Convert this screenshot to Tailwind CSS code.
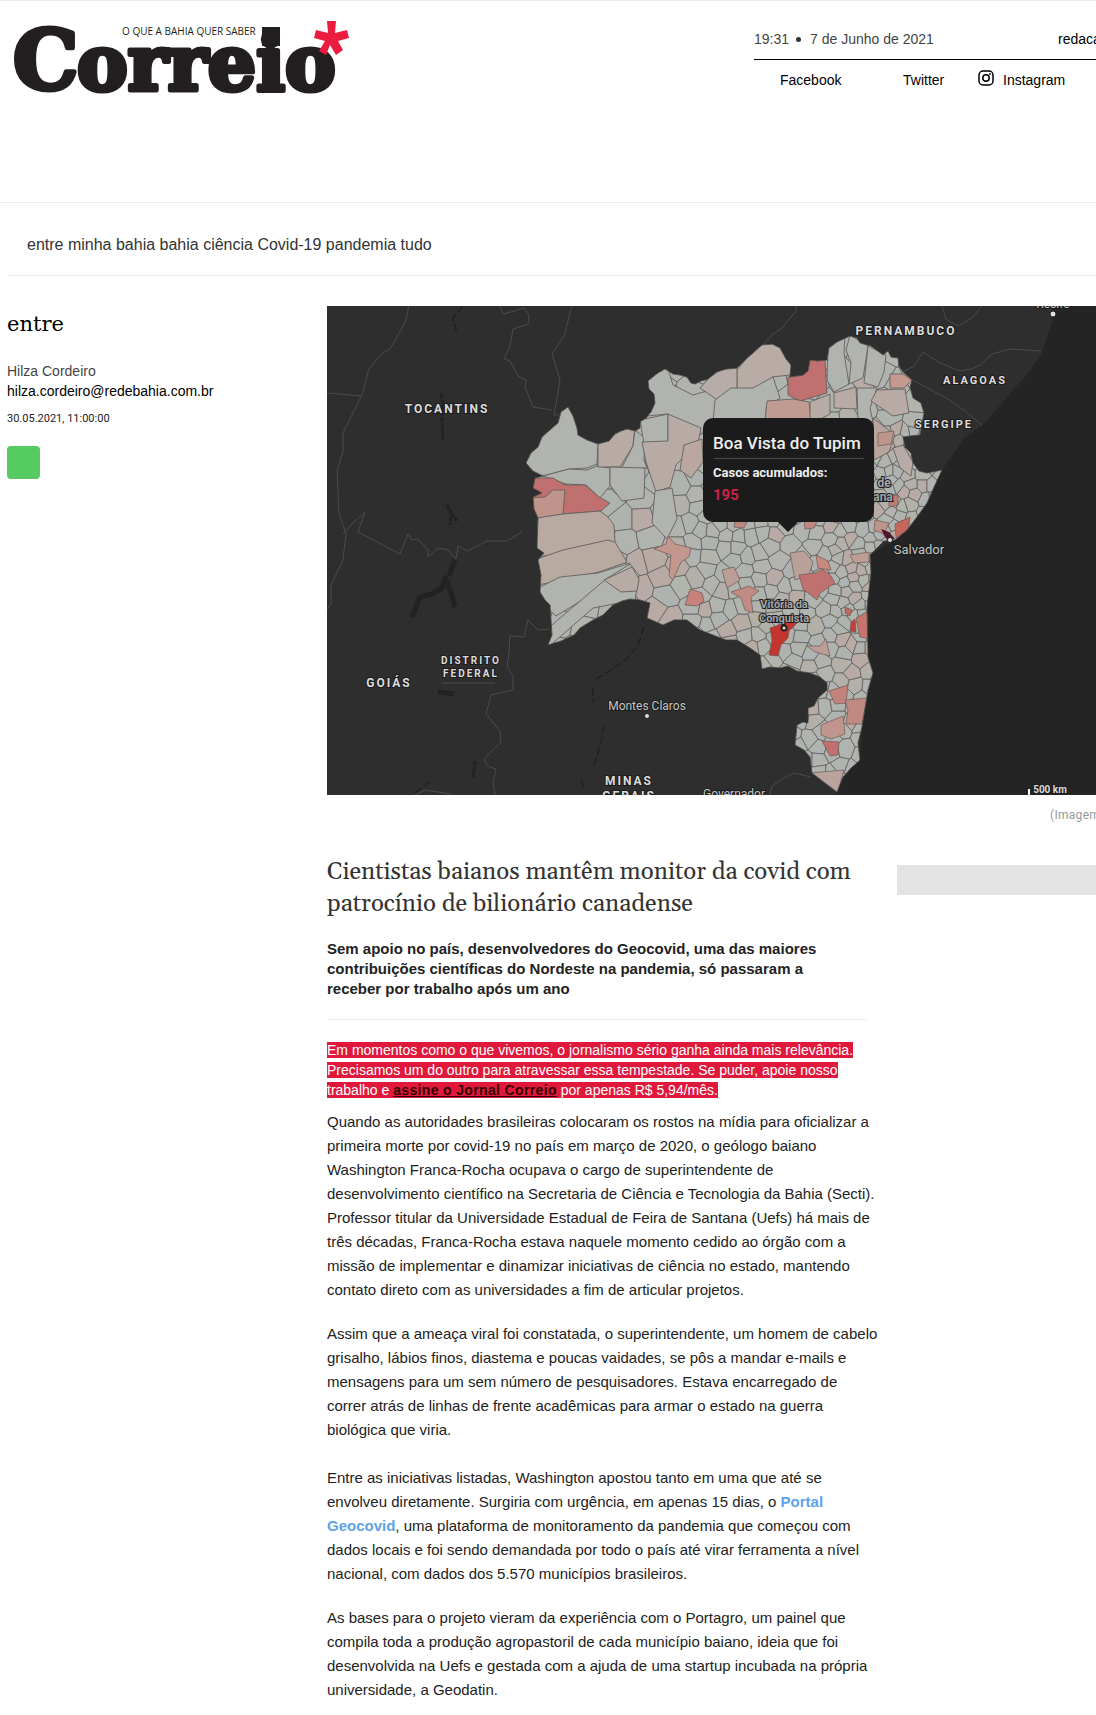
<!DOCTYPE html>
<html lang="pt-BR">
<head>
  <meta charset="UTF-8">
  <meta name="viewport" content="width=device-width, initial-scale=1.0">
  <title>Cientistas baianos mantêm monitor da covid - Correio</title>
  <script src="https://cdn.jsdelivr.net/npm/@tailwindcss/browser@4"></script>
</head>

<body class="bg-white overflow-x-hidden font-['Liberation_Sans',Arial,sans-serif] text-sm text-[#222]">

  <!-- Header -->
  <header class="flex justify-between h-[203px] border-t border-b border-[#ececec]">
    <a href="#" aria-label="Correio" class="block ml-3 mt-4">
      <svg width="340" height="84" viewBox="12 17 340 84">
        <g fill="#231f20" stroke="#231f20" stroke-linejoin="round" font-family="DejaVu Serif, serif" font-weight="bold">
          <text x="13" y="89" font-size="82" stroke-width="5">C</text>
          <text x="77" y="90" font-size="76" stroke-width="5">orreio</text>
          <path stroke="none" d="M262 27h18v19h-18z"/>
        </g>
        <text x="122" y="35" font-family="Open Sans, sans-serif" font-size="10" fill="#231f20">O QUE A BAHIA QUER SABER</text>
        <path fill="#ec1c40" d="M327 21h9l-1 12 12-3 2 8-11 3 5 9-7 5-6-10-4 10-7-4 6-10-11-3 2-8 12 3z"/>
      </svg>
    </a>

    <div class="w-[342px] shrink-0 pt-7 whitespace-nowrap">
      <div class="flex justify-between h-[31px] leading-5 border-b border-black text-[#444]">
        <span class="flex items-center h-5">19:31 <span class="w-[5px] h-[5px] mx-[7px] mr-[9px] rounded-full bg-[#333]"></span> 7 de Junho de 2021</span>
        <a href="#" class="w-[38px] text-black">redacao</a>
      </div>
      <nav class="flex items-center pl-[26px] pt-[10px] leading-5 text-black">
        <a href="#" class="w-[123px]">Facebook</a>
        <a href="#" class="w-[75px]">Twitter</a>
        <a href="#" class="flex items-center gap-[9px]">
          <svg class="w-4 h-4 mb-1" viewBox="0 0 16 16" fill="none" stroke="black" stroke-width="1.5">
            <rect x="1" y="1" width="14" height="14" rx="4"/>
            <circle cx="8" cy="8" r="3.2"/>
            <circle cx="12" cy="4" r="0.9" fill="black" stroke="none"/>
          </svg>
          Instagram
        </a>
      </nav>
    </div>
  </header>

  <!-- Tags -->
  <div class="flex items-center h-[73px] ml-[7px] mb-[30px] pl-5 pt-3 border-b border-[#ececec] text-base leading-5 text-[#333]">
    entre minha bahia bahia ciência Covid-19 pandemia tudo
  </div>

  <main class="grid grid-cols-[320px_1fr] pl-[7px]">

    <!-- Author -->
    <aside>
      <h2 class="mt-1 font-['DejaVu_Serif',serif] text-[21px] leading-7 text-black">entre</h2>
      <p class="mt-[23px] leading-5 text-[#444]">Hilza Cordeiro</p>
      <a href="#" class="block leading-5 text-black">hilza.cordeiro@redebahia.com.br</a>
      <time class="block mt-2 font-['Roboto',sans-serif] text-[11px] leading-5">30.05.2021, 11:00:00</time>
      <button type="button" aria-label="WhatsApp" class="block mt-[17px] w-[33px] h-[33px] rounded bg-[#55cb62]"></button>
    </aside>

    <div class="min-w-0">
      <figure>
        <svg class="block w-full h-auto" viewBox="327 306 769 489" role="img" aria-label="Mapa da Bahia">
          <defs>
            <path id="outline" d="M568 407L573 416 577 428 578 435 587 440 598 444 609 441 615 434 621 431 627 429 635 431 640 428 640 422 646 418 651 412 655 403 654 394 649 389 648 381 654 376 658 373 665 369 673 374 680 375 687 377 691 383 695 384 701 381 708 379 717 372 726 369 737 368 745 360 753 353 762 345 772 344 780 348 786 359 791 365 790 377 803 375 808 371 810 360 818 361 827 360 829 348 837 342 850 336 857 338 860 343 871 346 883 355 888 351 891 357 898 358 899 366 903 372 912 380 910 387 913 398 921 403 924 413 920 435 910 436 903 437 905 447 911 453 913 463 919 471 927 473 942 470 934 487 927 503 917 517 907 530 895 540 884 541 877 548 870 555 871 573 867 607 868 657 873 673 868 690 862 727 858 743 860 760 851 768 843 777 837 792 825 783 812 773 810 757 804 750 795 745 797 725 803 722 808 723 808 708 814 706 818 698 827 690 827 683 820 677 810 673 797 671 788 666 780 668 770 667 762 669 760 655 750 648 737 640 726 640 713 635 700 630 687 620 674 620 663 625 647 618 650 603 640 600 630 599 622 601 613 605 603 615 593 620 580 628 574 635 561 641 548 645 552 635 550 605 545 600 540 592 541 575 538 560 544 553 537 548 538 518 534 509 533 497 542 493 533 488 535 478 543 476 533 471 526 463 531 453 538 447 542 437 550 430 558 423 561 412z"/>
            <clipPath id="bahia"><use href="#outline"/></clipPath>
          </defs>

          <!-- land and sea -->
          <path fill="#2e2e2e" d="M327 306h769v489H327z"/>
          <path fill="#242424" d="M1053 306L1052 322 1041 355 1027 375 1014 389 1002 403 985 423 964 439 942 470 927 503 907 530 895 540 870 555 867 607 868 657 873 673 862 727 860 760 843 777 836 795 1096 795 1096 306z"/>

          <!-- state borders -->
          <g fill="none" stroke="#4b4b4b" stroke-width="1">
            <path d="M409 306l-4 17-15 26-8 4-13 16-7 26-19 38v18l-6 20 2 43 7 19-3 27-12 25v20l-4 4"/>
            <path d="M327 393l34 3M499 306l5 8 20-6 5 7-1 9-15 5-3 17-6 13 6 2 8 15 8 4-1 7 8 20 19 3M572 306l-8 30-12 18 8 26-6 35h10"/>
            <path d="M343 534l9-10 13-12-7 20 42 22 8-20 4 6 6-1 10 11v7l10-9 10 2 8 9 2-13 9 5 20-10h20l15-9"/>
            <path d="M550 629l-12 1-10-10-4 17-14-1-1 17-2 14 6 9v14l-22 5-5 19 14 17 1 11-17 17 3 7 9 3-3 13 2 12-19 11M442 683h53M415 795l10-5 26 4"/>
            <path d="M764 344l8-9 10-7 14-17v-5M942 306l4 13 12 7 14-8 10-12M903 372l11-6 9-14 17 11 20 8 11-2 9-4 12-11 18-5 31 2M912 380l36 19 17 12 17 14"/>
            <path d="M770 795l2-9 10-7 12-6 17 4"/>
          </g>

          <!-- rivers and lakes -->
          <g fill="none" stroke="#222" stroke-linejoin="round">
            <path stroke-width="3" stroke-dasharray="5 1" d="M441 393l2 12-1 18 1 18M447 505l4 8-1 12M451 513l6 8M475 761l-2 17"/>
            <path stroke-width="5" d="M412 617l4-10 4-10 12-3 10-6 3-10 6 14 4 15M449 576l6-16M438 692l16 2"/>
            <path stroke-width="1.500" stroke-dasharray="8 3" d="M463 306l-10 12 4 16M644 627l-6 18-12 15-28 18-4 3M593 688v15M604 726l-4 20-6 20M415 793l18-14M581 780l4 10"/>
          </g>

          <use href="#outline" fill="#b1b3ae"/>
          <g clip-path="url(#bahia)">
            <g id="cells" stroke="#63625f" stroke-width="0.8"></g>

            <!-- larger municipalities -->
            <g stroke="#63625f" stroke-width="0.9" stroke-linejoin="round" fill="#b1b3ae">
              <path d="M550 400l30 8 18 36-1 20-10 4-18 1-26 7-30-10z"/>
              <path d="M543 476l26-7 18 1 10-4 13 2v18l-10 12-14-13-20-1-20-7z"/>
              <path fill="#b8aaa4" d="M598 440l20-14 17 0-2 20-13 21h-22z"/>
              <path d="M635 430l10 8-1 22 3 8-26 1 12-23z"/>
              <path d="M610 467l35 1-1 30-22 3-12-16z"/>
              <path fill="#c0706f" d="M525 478l28 0 12 7 20 0 14 12 11 6-9 8-40 3-37-16z"/>
              <path fill="#bf958b" d="M525 498l20-1 8-7 12 0-2 24-35 6z"/>
              <path fill="#b8a9a1" d="M530 519l33-5 37-3 8 6 6 8 1 17-24 6-65 11z"/>
              <path fill="#b8a9a1" d="M528 562l35-12 45-10 7 2 12 20-28 10-70 15z"/>
              <path d="M530 592l30-15 38-4 32-10-13 16-61 37z"/>
              <path d="M546 630l60-51 24-15 9 11-4 25-42 8-48 42z"/>
              <path fill="#b8aaa4" d="M604 580l28-13 7 12-2 12-16 1z"/>
              <path d="M648 360l20 9 5 16 20 10 28-8-1 25-20 23-33-21-20 2-8-26z"/>
              <path d="M640 420l28-6v28l-24 2z"/>
              <path fill="#b8aaa4" d="M668 414l33 14-3 15-22 22-6 22-14 5-10-30-4-20 26-1z"/>
              <path fill="#b9a7a0" d="M684 445l18-6 1 23-12 16-11-8z"/>
              <path d="M655 491l17-3 5 31-10 20-15-16z"/>
              <path fill="#b9aba5" d="M737 370l10-12 15-14 18 0 12 22-2 9-18 2-9 12-26 0z"/>
              <path fill="#b7aca7" d="M700 388l16-18 21-2v20l-18 13z"/>
              <path d="M715 400l16-12h22l20-11 7 21-14 10 2 14h-55z"/>
              <path fill="#c0706f" d="M788 377l15-2 5-17 17 2 2 33-27 8-12-6z"/>
              <path fill="#bf9b91" d="M767 401l26-2 16 3 2 17-46 2z"/>
              <path fill="#b8aaa4" d="M810 402l20-8v20l-13 7-7-2z"/>
              <path d="M828 345l17-10-1 18 5 31-15 8-7-12z"/>
              <path d="M850 335l18 11-5 32-14 6 2-21-5-13z"/>
              <path d="M868 346l18 9-2 17-6 15-14-4z"/>
              <path fill="#b8aaa4" d="M834 393l22-6 1 22-23-1z"/>
              <path d="M857 388l20 0-7 20 3 14h-15z"/>
              <path fill="#c49a8f" d="M890 374l13 0 9 6-8 8-14 0z"/>
              <path fill="#b8aaa4" d="M877 390l28-1 4 24-16 3-22-15z"/>
              <path fill="#b8a59d" d="M873 418l22 17-6 17-15 8z"/>
              <path fill="#b8aba5" d="M893 448l10-3 10 17-2 14-11-8z"/>
            </g>

            <!-- municipalities with more cases -->
            <g stroke="#6a5b58" stroke-width="0.7" stroke-linejoin="round" fill="#c39a91">
              <path fill="#c3978d" d="M654 549l12-5 2-8 7 8 16 4-2 9-8 5-8 18-4-4 2-21z"/>
              <path fill="#c5817a" d="M690 589l12 4 2 8-7 5-12-1z"/>
              <path fill="#b9a19a" d="M790 553l14-2 9 11-4 13-14 5z"/>
              <path fill="#c0706f" d="M799 575l16-2 8-4 8 7 4 7-15 10-3 7-14-11z"/>
              <path fill="#c98980" d="M816 555l12 6 3 9-13-2z"/>
              <path fill="#c08b83" d="M731 592l18-6 10 5-8 6 2 16-8-3-4-12z"/>
              <path fill="#bd9e96" d="M722 570l12-3 6 13-13 8z"/>
              <path fill="#c5352f" d="M770 628l17-6h11l-9 9-1 7-7 7-3 11-9-1 3-15z"/>
              <path fill="#bc9e96" d="M807 646l13 0 6-7 4 17-15-4z"/>
              <path fill="#c5746e" d="M856 618l12-7 2 28-10-2z"/>
              <path fill="#c63f3b" d="M851 622l4-3 1 13-6-1z"/>
              <path fill="#c5665f" d="M845 607l7 3-2 6-5-3z"/>
              <path fill="#c3827b" d="M829 691l19-6-2 18-11 1z"/>
              <path fill="#c08a83" d="M845 700l22-2-5 26h-16l2-14z"/>
              <path fill="#c0958d" d="M821 725l22-9 2 18-14 5-10-4z"/>
              <path fill="#c0706f" d="M822 741l17 1-1 13-8 1z"/>
              <path fill="#baa39c" d="M810 773l34-3-7 25z"/>
              <path fill="#bc9e96" d="M850 555l19-3v10l-15 1z"/>
              <path fill="#c5665f" d="M895 524l15-7-2 13-12 8z"/>
              <path fill="#c07b74" d="M889 495l9 0v10l-9 2z"/>
              <path fill="#bf877f" d="M735 521l12 1-3 6-10-1zM804 520l14 0-4 8-9 1z"/>
              <path fill="#bc958c" d="M878 433l16-2-3 13-13 2zM875 520l14 3-5 11-10-4z"/>
              <path fill="#50152b" stroke="none" d="M881 529l8 3 6 7-8 1z"/>
            </g>
          </g>
          <use href="#outline" fill="none" stroke="#3c3c3a" stroke-width="0.8"/>

          <!-- place names -->
          <g font-family="Roboto, sans-serif" fill="#dcdcdc" stroke="#1c1c1c" stroke-width="2" paint-order="stroke" text-anchor="middle">
            <g font-size="12" font-weight="bold" letter-spacing="2">
              <text x="447" y="413">TOCANTINS</text>
              <text x="906" y="335">PERNAMBUCO</text>
              <text x="975" y="384" font-size="11">ALAGOAS</text>
              <text x="944" y="428" font-size="11">SERGIPE</text>
              <text x="389" y="687">GOIÁS</text>
              <text x="471" y="664" font-size="10">DISTRITO</text>
              <text x="471" y="677" font-size="10">FEDERAL</text>
              <text x="629" y="785">MINAS</text>
              <text x="629" y="800">GERAIS</text>
            </g>
            <g font-size="12" fill="#c4c4c4">
              <text x="647" y="710">Montes Claros</text>
              <text x="919" y="554" font-size="13">Salvador</text>
              <text x="1053" y="308">Recife</text>
              <text x="734" y="798">Governador</text>
            </g>
            <g font-size="11" font-weight="bold" fill="#a5a5a5">
              <text x="784" y="608">Vitória da</text>
              <text x="784" y="622">Conquista</text>
              <text x="884" y="487" font-size="12">de</text>
              <text x="883" y="501" font-size="12">ana</text>
            </g>
            <text x="1050" y="793" font-size="10" font-weight="bold">500 km</text>
          </g>
          <g fill="#e0e0e0" stroke="#222" stroke-width="1">
            <circle cx="647" cy="716" r="2.5"/>
            <circle cx="1053" cy="314" r="3"/>
            <circle cx="890" cy="540" r="2.5"/>
            <circle cx="784" cy="628" r="2.5" stroke-width="2"/>
          </g>
          <path d="M1029 789v6" stroke="#fff" stroke-width="2"/>

          <!-- tooltip -->
          <path fill="#1b1b1b" d="M713 418h151a10 10 0 0 1 10 10v84a10 10 0 0 1-10 10h-66l-10 10-10-10h-65a10 10 0 0 1-10-10v-84a10 10 0 0 1 10-10z"/>
          <g font-family="Roboto, sans-serif">
            <text x="713" y="449" font-size="17" font-weight="500" fill="#eee">Boa Vista do Tupim</text>
            <path d="M714 458.500h150" stroke="#4a4a4a"/>
            <text x="713" y="477" font-size="13" font-weight="bold" fill="#eee">Casos acumulados:</text>
            <text x="713" y="500" font-size="15" font-weight="bold" fill="#cb2449">195</text>
          </g>
        </svg>
        <figcaption class="flex justify-end mt-[10px] font-['Roboto',sans-serif] text-xs leading-5 tracking-wide text-[#999] whitespace-nowrap">
          <span class="w-[46px]">(Imagem</span>
        </figcaption>
      </figure>

      <div class="flex gap-[30px]">
        <article class="w-[540px] shrink-0">
          <h1 class="mt-[31px] font-[Georgia,Gelasio,'Liberation_Serif',serif] text-2xl leading-8 text-[#333]">Cientistas baianos mantêm monitor da covid com patrocínio de bilionário canadense</h1>
          <p class="mt-[19px] pr-4 pb-5 border-b border-[#ececec] font-bold text-[15px] leading-5 text-[#222]">Sem apoio no país, desenvolvedores do Geocovid, uma das maiores contribuições científicas do Nordeste na pandemia, só passaram a receber por trabalho após um ano</p>

          <p class="mt-5 mb-[10px] leading-5 text-white">
            <span class="bg-[#e0193c]">Em momentos como o que vivemos, o jornalismo sério ganha ainda mais relevância. Precisamos um do outro para atravessar essa tempestade. Se puder, apoie nosso trabalho e <a href="#" class="font-bold underline tracking-wide text-[#300]">assine o Jornal Correio</a> por apenas R$ 5,94/mês.</span>
          </p>

          <div class="-mr-3 text-[15px] leading-6">
            <p class="mb-5">Quando as autoridades brasileiras colocaram os rostos na mídia para oficializar a primeira morte por covid-19 no país em março de 2020, o geólogo baiano Washington Franca-Rocha ocupava o cargo de superintendente de desenvolvimento científico na Secretaria de Ciência e Tecnologia da Bahia (Secti). Professor titular da Universidade Estadual de Feira de Santana (Uefs) há mais de três décadas, Franca-Rocha estava naquele momento cedido ao órgão com a missão de implementar e dinamizar iniciativas de ciência no estado, mantendo contato direto com as universidades a fim de articular projetos.</p>
            <p class="mb-6">Assim que a ameaça viral foi constatada, o superintendente, um homem de cabelo grisalho, lábios finos, diastema e poucas vaidades, se pôs a mandar e-mails e mensagens para um sem número de pesquisadores. Estava encarregado de<br>correr atrás de linhas de frente acadêmicas para armar o estado na guerra biológica que viria.</p>
            <p class="mb-5">Entre as iniciativas listadas, Washington apostou tanto em uma que até se envolveu diretamente. Surgiria com urgência, em apenas 15 dias, o <a href="#" class="font-bold text-[#5ea3ea]">Portal Geocovid</a>, uma plataforma de monitoramento da pandemia que começou com dados locais e foi sendo demandada por todo o país até virar ferramenta a nível nacional, com dados dos 5.570 municípios brasileiros.</p>
            <p>As bases para o projeto vieram da experiência com o Portagro, um painel que compila toda a produção agropastoril de cada município baiano, ideia que foi desenvolvida na Uefs e gestada com a ajuda de uma startup incubada na própria universidade, a Geodatin.</p>
          </div>
        </article>
        <div class="grow h-[30px] mt-[40px] bg-[#e3e3e3]"></div>
      </div>
    </div>
  </main>

<script>
  // small municipalities: Voronoi cells, denser towards the coast
  const fills = ["#b1b3ae", "#b0b4b0", "#b1b3ae", "#b3b0aa", "#b2b4ae", "#aeb3b0", "#b1b3ae", "#b8aaa4"];
  let seed = 7;
  function rand() {
    seed = (seed * 16807) % 2147483647;
    return seed / 2147483647;
  }

  const sites = [];
  for (let tries = 0; tries < 12000; tries++) {
    const x = 520 + rand() * 430;
    const y = 330 + rand() * 465;
    const minDist = x > 830 && y > 430 && y < 650 ? 8 : x > 690 && y > 470 ? 11 : 17;
    if (sites.every(s => Math.hypot(s[0] - x, s[1] - y) > minDist)) sites.push([x, y]);
  }

  // keep the part of the polygon that is nearer to a than to b
  function cut(poly, a, b) {
    const mx = (a[0] + b[0]) / 2, my = (a[1] + b[1]) / 2;
    const side = p => (p[0] - mx) * (b[0] - a[0]) + (p[1] - my) * (b[1] - a[1]);
    const out = [];
    poly.forEach((p, i) => {
      const q = poly[(i + 1) % poly.length];
      const sp = side(p), sq = side(q);
      if (sp <= 0) out.push(p);
      if (sp * sq < 0) {
        const t = sp / (sp - sq);
        out.push([p[0] + t * (q[0] - p[0]), p[1] + t * (q[1] - p[1])]);
      }
    });
    return out;
  }

  const cells = document.getElementById('cells');
  sites.forEach(a => {
    let poly = [[a[0] - 40, a[1] - 40], [a[0] + 40, a[1] - 40], [a[0] + 40, a[1] + 40], [a[0] - 40, a[1] + 40]];
    sites.forEach(b => {
      if (b !== a && Math.hypot(a[0] - b[0], a[1] - b[1]) < 80) poly = cut(poly, a, b);
    });
    const el = document.createElementNS('http://www.w3.org/2000/svg', 'polygon');
    el.setAttribute('points', poly.map(p => p.map(Math.round).join(',')).join(' '));
    el.setAttribute('fill', fills[Math.floor(rand() * fills.length)]);
    cells.appendChild(el);
  });
</script>

</body>
</html>
